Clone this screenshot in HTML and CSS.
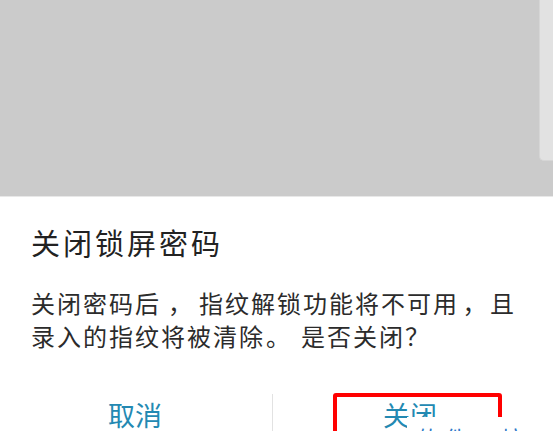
FILE: index.html
```html
<!DOCTYPE html>
<html lang="zh-CN">
<head>
<meta charset="utf-8">
<link rel="stylesheet" href="styles.css">
</head>
<body>
<div class="screen">
  <div class="backdrop">
    <div class="side-panel"></div>
  </div>
  <div class="sep"></div>
  <div class="dialog">
    <div class="title">关闭锁屏密码</div>
    <div class="message">
      <div class="line">关闭密码后<span class="punct">，</span>指纹解锁功能将不可用<span class="punct narrow">，</span>且</div>
      <div class="line">录入的指纹将被清除<span class="punct stop">。</span>是否关闭<span class="punct ask">？</span></div>
    </div>
    <div class="actions">
      <div class="btn btn-cancel">取消</div>
      <div class="divider"></div>
      <div class="btn btn-ok">关闭</div>
    </div>
  </div>
  <div class="highlight"></div>
  <div class="watermark">软件工坊</div>
</div>
</body>
</html>
```
FILE: styles.css
```css
html, body {
  margin: 0;
  padding: 0;
  background: #ffffff;
}
body {
  width: 553px;
  height: 431px;
  overflow: hidden;
  font-family: "Noto Sans CJK SC", "Noto Sans", sans-serif;
}
.screen {
  position: relative;
  width: 553px;
  height: 431px;
  overflow: hidden;
  display: flex;
  flex-direction: column;
}
.backdrop {
  position: relative;
  height: 196px;
  background: #cbcbcb;
  flex: none;
}
.side-panel {
  position: absolute;
  right: 0;
  top: 0;
  width: 13px;
  height: 160px;
  background: #e2e2e2;
  border-left: 1px solid #d6d6d6;
  border-bottom: 1px solid #d6d6d6;
  border-bottom-left-radius: 5px;
}
.sep {
  height: 1px;
  background: #e8e8e8;
  flex: none;
}
.dialog {
  flex: 1;
  background: #ffffff;
  padding: 31px 0 0 31px;
  display: flex;
  flex-direction: column;
}
.title {
  font-size: 29px;
  line-height: 29px;
  letter-spacing: 3px;
  color: #222222;
}
.message {
  margin-top: 29px;
  font-size: 24px;
  line-height: 33px;
  letter-spacing: 2px;
  color: #2b2b2b;
}
.line {
  white-space: nowrap;
}
.punct {
  display: inline-block;
  width: 38px;
  text-align: center;
  letter-spacing: 0;
}
.punct.narrow {
  width: 31px;
}
.punct.stop {
  width: 36px;
  text-align: left;
  padding-left: 1px;
  box-sizing: border-box;
}
.punct.ask {
  width: 18px;
  text-align: right;
}
.actions {
  margin-top: 42px;
  margin-left: -31px;
  display: flex;
  align-items: flex-start;
}
.btn {
  text-align: center;
  font-size: 27px;
  line-height: 27px;
  padding-top: 7px;
  color: #2389b2;
}
.btn-cancel {
  width: 270px;
  flex: none;
}
.btn-ok {
  flex: 1;
  padding-right: 6px;
}
.divider {
  width: 1px;
  height: 40px;
  margin-left: 2px;
  background: #e2e2e2;
}
.highlight {
  position: absolute;
  left: 333px;
  top: 393px;
  width: 161px;
  height: 60px;
  border: 4px solid #ff0000;
  border-radius: 3px;
}
.watermark {
  position: absolute;
  left: 407px;
  top: 417px;
  width: 130px;
  height: 14px;
  overflow: hidden;
  background: #ffffff;
  color: #2b78c8;
  font-size: 22px;
  line-height: 22px;
  padding: 9px 0 0 10px;
  box-sizing: border-box;
  letter-spacing: 6px;
}
```
